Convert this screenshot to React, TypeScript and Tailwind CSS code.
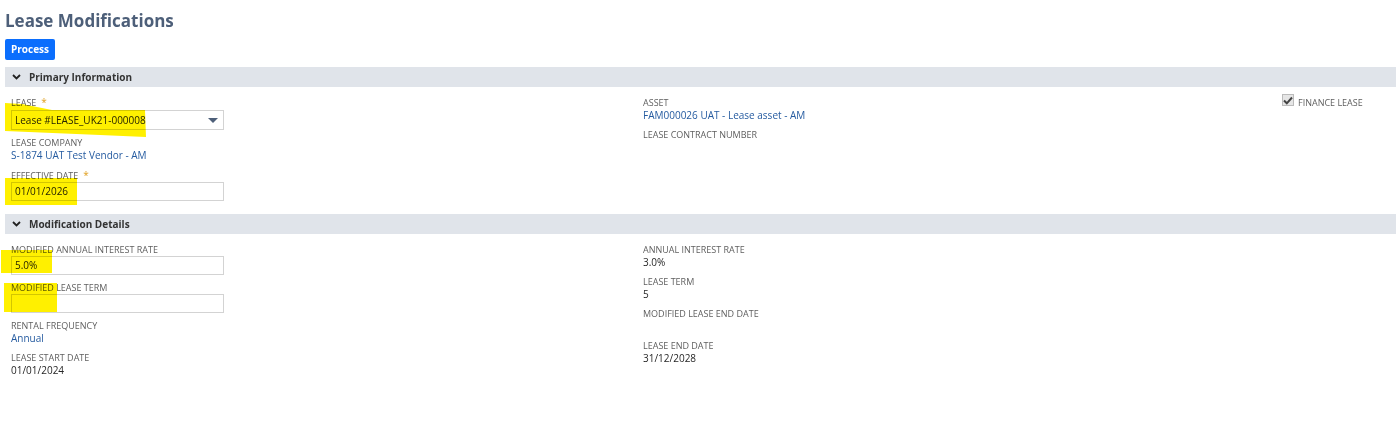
import React from "react";

const font = { fontFamily: '"Open Sans", "Liberation Sans", sans-serif' };

function Label({ text, required }: { text: string; required?: boolean }) {
  return (
    <div className="text-[9px] leading-[13px] text-[#5f5f5f] uppercase">
      {text}
      {required && <span className="text-[#e0a020] ml-[5px] text-[10px]">*</span>}
    </div>
  );
}

function Value({ text, link }: { text?: string; link?: boolean }) {
  return (
    <div className={`text-[10px] leading-[13px] h-[13px] ${link ? "text-[#255ba0]" : "text-[#262626]"}`}>
      {text}
    </div>
  );
}

function Input({ value }: { value?: string }) {
  return (
    <div className="w-[213px] h-[19px] border border-[#d3d3d3] bg-white px-[3px] text-[10px] leading-[17px] text-[#262626]">
      {value}
    </div>
  );
}

function SectionBar({ title }: { title: string }) {
  return (
    <div className="h-[20px] bg-[#e0e4ea] flex items-center pl-[7px]">
      <svg width="9" height="6" viewBox="0 0 9 6" className="mr-[8px]">
        <path d="M1 1l3.5 3.5L8 1" stroke="#222" strokeWidth="1.8" fill="none" />
      </svg>
      <span className="text-[10px] font-bold text-[#333]">{title}</span>
    </div>
  );
}

export default function App() {
  return (
    <div className="relative w-[1396px] h-[428px] bg-white overflow-hidden pl-[5px]" style={font}>
      <h1 className="pt-[9px] text-[17px] leading-[23px] font-bold text-[#4d5f79]">Lease Modifications</h1>
      <button className="mt-[7px] w-[50px] h-[21px] rounded-[2px] bg-[#0b6efd] text-white text-[10px] font-bold">
        Process
      </button>

      <div className="mt-[7px]">
        <SectionBar title="Primary Information" />
        <div className="grid grid-cols-[632px_639px_1fr] pl-[6px] pt-[9px]">
          <div className="flex flex-col gap-[6px]">
            <div>
              <Label text="Lease" required />
              <div className="mt-px w-[213px] h-[20px] border border-[#d3d3d3] bg-white flex items-center justify-between pl-[3px] pr-[5px]">
                <span className="text-[10px] text-[#262626]">Lease #LEASE_UK21-000008</span>
                <svg width="10" height="5" viewBox="0 0 10 5">
                  <path d="M0 0h10L5 5z" fill="#4d5f79" />
                </svg>
              </div>
            </div>
            <div>
              <Label text="Lease Company" />
              <Value text="S-1874 UAT Test Vendor - AM" link />
            </div>
            <div className="mt-px">
              <Label text="Effective Date" required />
              <Input value="01/01/2026" />
            </div>
          </div>
          <div className="flex flex-col gap-[6px]">
            <div>
              <Label text="Asset" />
              <Value text="FAM000026 UAT - Lease asset - AM" link />
            </div>
            <Label text="Lease Contract Number" />
          </div>
          <div className="flex items-start gap-[4px] -mt-[2px]">
            <div className="w-[12px] h-[12px] border border-[#bbb] bg-[#e6e6e6] flex items-center justify-center">
              <svg width="10" height="9" viewBox="0 0 10 9">
                <path d="M1 4.5l2.8 2.8L9 1.5" stroke="#444" strokeWidth="2" fill="none" />
              </svg>
            </div>
            <div className="text-[9px] leading-[13px] text-[#5f5f5f] pt-[2px]">FINANCE LEASE</div>
          </div>
        </div>
      </div>

      <div className="mt-[13px]">
        <SectionBar title="Modification Details" />
        <div className="grid grid-cols-[632px_639px_1fr] pl-[6px] pt-[9px]">
          <div className="flex flex-col gap-[6px]">
            <div>
              <Label text="Modified Annual Interest Rate" />
              <Input value="5.0%" />
            </div>
            <div>
              <Label text="Modified Lease Term" />
              <Input />
            </div>
            <div>
              <Label text="Rental Frequency" />
              <Value text="Annual" link />
            </div>
            <div>
              <Label text="Lease Start Date" />
              <Value text="01/01/2024" />
            </div>
          </div>
          <div className="flex flex-col gap-[6px]">
            <div>
              <Label text="Annual Interest Rate" />
              <Value text="3.0%" />
            </div>
            <div>
              <Label text="Lease Term" />
              <Value text="5" />
            </div>
            <div>
              <Label text="Modified Lease End Date" />
              <Value />
            </div>
            <div>
              <Label text="Lease End Date" />
              <Value text="31/12/2028" />
            </div>
          </div>
          <div />
        </div>
      </div>

      {/* highlighter marks */}
      <svg className="absolute left-0 top-0 pointer-events-none mix-blend-multiply" width="160" height="320">
        <polygon points="5,103 22,104 52,110 145,110 146,137 100,135 5,131" fill="#fff000" />
        <rect x="5" y="178" width="72" height="27" fill="#fff000" />
        <rect x="1" y="250" width="51" height="23" fill="#fff000" />
        <rect x="4" y="283" width="53" height="29" fill="#fff000" />
      </svg>
    </div>
  );
}
